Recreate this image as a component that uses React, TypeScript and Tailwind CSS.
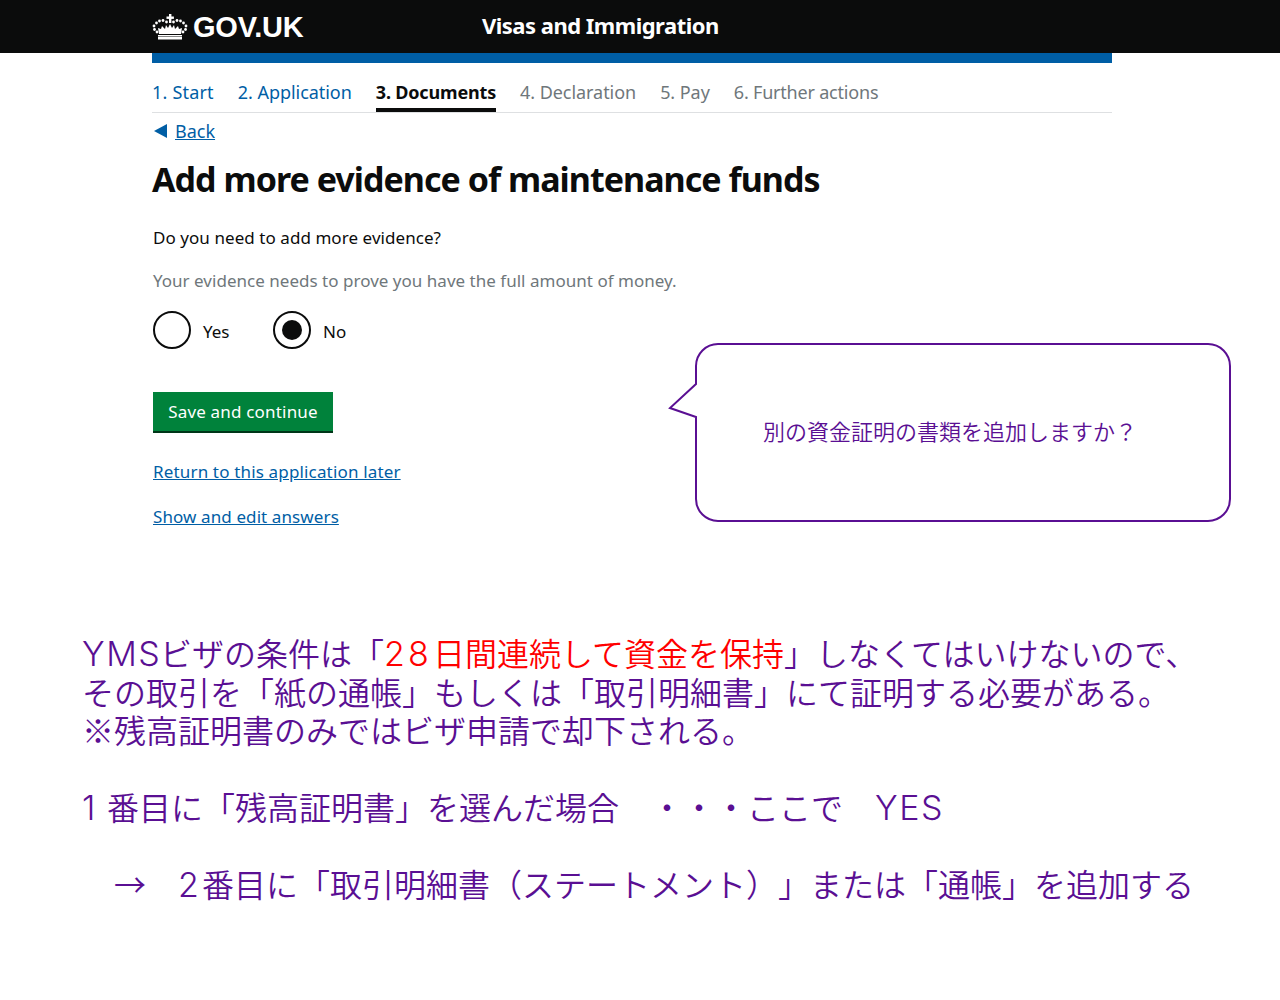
const pearls = [
  [14.5, 8], [11, 6.5], [7.5, 7], [4.5, 9], [2, 12], [2.5, 15.5], [5, 18],
  [21.5, 8], [25, 6.5], [28.5, 7], [31.5, 9], [34, 12], [33.5, 15.5], [31, 18],
];

const App = () => {
  return (
    <div className="relative h-[1000px] bg-white font-['Noto_Sans','Noto_Sans_CJK_JP',sans-serif] overflow-hidden">
      <div className="h-[53px] bg-[#0b0c0c] pl-[152px] flex items-center">
        <div className="w-[330px] flex items-center gap-[5px]">
          <svg width="36" height="26" viewBox="0 0 36 26" fill="#fff">
            <rect x="17" y="0" width="2.4" height="9" />
            <rect x="14.5" y="2.5" width="7.4" height="2.4" />
            {pearls.map(([cx, cy]) => (
              <circle key={`${cx}-${cy}`} cx={cx} cy={cy} r="1.4" />
            ))}
            <path d="M18 10 L20 14 L22 11 L23 15 L26 12 L27 15 L30 14 L29 20 L7 20 L6 14 L9 15 L10 12 L13 15 L14 11 L16 14 Z" />
            <rect x="6" y="21" width="24" height="1.5" />
            <rect x="6" y="23" width="24" height="2.5" />
          </svg>
          <span className="text-white font-bold font-['Liberation_Sans',sans-serif] text-[29px] tracking-[-0.2px] leading-none mt-px">GOV.UK</span>
        </div>
        <span className="text-white font-bold text-[22px] tracking-[-0.52px] mb-[2px]">Visas and Immigration</span>
      </div>
      <div className="w-[960px] ml-[152px]">
        <div className="h-[10px] bg-[#005ea5]" />
        <div className="h-[50px] flex gap-6 border-b border-[#dee0e2] text-[18px] tracking-[-0.05px] text-[#6f777b]">
          <span className="pt-[16px] tracking-[0.2px] text-[#005ea5]">1. Start</span>
          <span className="pt-[16px] text-[#005ea5]">2. Application</span>
          <span className="pt-[16px] text-[#0b0c0c] font-bold tracking-[-0.17px] border-b-4 border-[#0b0c0c]">3. Documents</span>
          <span className="pt-[16px]">4. Declaration</span>
          <span className="pt-[16px]">5. Pay</span>
          <span className="pt-[16px] tracking-[-0.2px]">6. Further actions</span>
        </div>
        <div className="flex items-center gap-2 mt-[7px] text-[18px] leading-[22px]">
          <div className="w-0 h-0 border-y-[7px] border-y-transparent border-r-[13px] border-r-[#005ea5] ml-[2px]" />
          <a className="underline text-[#005ea5]">Back</a>
        </div>
        <h1 className="mt-[15px] text-[34px] tracking-[-0.97px] font-bold leading-[44px] text-[#0b0c0c]">Add more evidence of maintenance funds</h1>
        <div className="pl-px text-[17px]">
          <p className="mt-[25px] leading-[24px] tracking-[0.06px] text-[#0b0c0c]">Do you need to add more evidence?</p>
          <p className="mt-[19px] leading-[24px] tracking-[0.02px] text-[#6f777b]">Your evidence needs to prove you have the full amount of money.</p>
          <div className="mt-[18px] flex items-center text-[#0b0c0c]">
            <div className="w-[38px] h-[38px] rounded-full border-2 border-[#0b0c0c]" />
            <span className="ml-3 mt-1 w-[70px]">Yes</span>
            <div className="w-[38px] h-[38px] rounded-full border-2 border-[#0b0c0c] flex items-center justify-center">
              <div className="w-5 h-5 rounded-full bg-[#0b0c0c]" />
            </div>
            <span className="ml-3 mt-1">No</span>
          </div>
          <button className="mt-[43px] block h-[41px] w-[180px] bg-[#00823b] border-b-2 border-[#003618] text-white tracking-[0.18px]">Save and continue</button>
          <a className="mt-[27px] block underline leading-[24px] tracking-[0.16px] text-[#005ea5]">Return to this application later</a>
          <a className="mt-[21px] block underline leading-[24px] tracking-[0.1px] text-[#005ea5]">Show and edit answers</a>
        </div>
      </div>

      <div className="absolute left-[668px] top-[342px] w-[564px] h-[181px]">
        <svg width="564" height="181" viewBox="0 0 564 181" fill="none" stroke="#5a0f93" strokeWidth="2">
          <path d="M50 2 H540 A22 22 0 0 1 562 24 V157 A22 22 0 0 1 540 179 H50 A22 22 0 0 1 28 157 V75 L2 66 L28 42 V24 A22 22 0 0 1 50 2 Z" />
        </svg>
        <p className="absolute left-[95px] top-[72px] whitespace-nowrap text-[22px] leading-[32px] font-[350] text-[#5a0f93] font-['Noto_Sans_CJK_JP',sans-serif] [text-spacing-trim:space-all]">別の資金証明の書類を追加しますか？</p>
      </div>

      <div className="absolute left-[82px] top-[633px] whitespace-nowrap text-[32px] leading-[38.5px] font-[350] text-[#5a0f93] font-['Noto_Sans_CJK_JP',sans-serif] [text-spacing-trim:space-all]">
        <p>
          <span className="inline-block w-[78px] font-['Inter',sans-serif] font-light text-[34px] leading-none tracking-[1.5px]">YMS</span>ビザの条件は「
          <span className="text-[#ff0000]">
            <span className="inline-block w-[49px] font-['Inter',sans-serif] font-light text-[34px] leading-none tracking-[3px]">28</span>日間連続して資金を保持
          </span>
          」しなくてはいけないので、
        </p>
        <p>その取引を「紙の通帳」もしくは「取引明細書」にて証明する必要がある。</p>
        <p>※残高証明書のみではビザ申請で却下される。</p>
        <p>&nbsp;</p>
        <p>
          <span className="inline-block w-[25px] font-['Inter',sans-serif] font-light text-[34px] leading-none">1</span>
          {"番目に「残高証明書」を選んだ場合　・・・ここで　"}
          <span className="inline-block w-[69px] font-['Inter',sans-serif] font-light text-[34px] leading-none tracking-[1.5px]">YES</span>
        </p>
        <p>&nbsp;</p>
        <p>
          {"　→　"}
          <span className="inline-block w-[24px] font-['Inter',sans-serif] font-light text-[34px] leading-none">2</span>
          番目に「取引明細書（ステートメント）」または「通帳」を追加する
        </p>
      </div>
    </div>
  );
};

export default App;
